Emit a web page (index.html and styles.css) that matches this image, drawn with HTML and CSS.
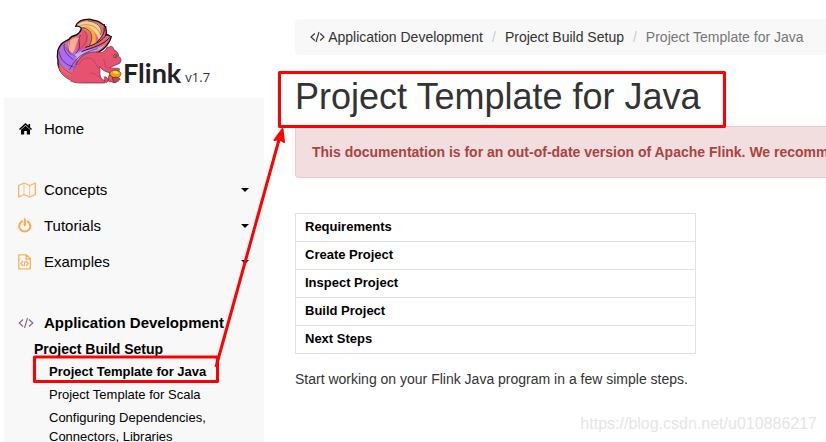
FILE: index.html
```html
<!DOCTYPE html>
<html lang="en">
<head>
    <meta charset="UTF-8">
    <meta name="viewport" content="width=device-width, initial-scale=1.0">
    <title>Apache Flink 1.7 Documentation: Project Template for Java</title>
    <link rel="stylesheet" href="styles.css">
</head>
<body>
    <div class="page">
        <aside class="sidebar">
            <a class="logo" href="#">
                <svg class="logo-image" width="70" height="72" viewBox="0 0 210 216" aria-hidden="true">
                    <!-- Tail -->
                    <path d="M62,200 C28,190 6,165 9,135 C4,120 10,112 8,108 C16,84 22,84 42,73 C46,66 54,62 64,60 C70,56 77,50 79,42 C78,35 72,32 62,34 C66,20 82,12 98,13 C106,10 112,16 122,17 C138,20 144,32 148,29 C147,35 151,37 152,35 C152,45 158,51 152,60 C161,57 161,63 169,65 C165,83 149,102 130,112 C105,121 80,128 62,150 Z" fill="#e8657a" stroke="#111" stroke-width="4" stroke-linejoin="round" />
                    <path d="M66,30 C86,14 116,15 130,28 C143,40 144,57 132,76 C124,49 107,34 79,36 Z" fill="#fbd08a" />
                    <path d="M89,33 C111,34 126,53 122,82 L105,94 C113,65 109,49 89,43 Z" fill="#f8a83c" />
                    <path d="M82,45 C102,53 105,74 93,102 L66,115 C59,86 82,70 82,45 Z" fill="#e7526f" />
                    <path d="M44,77 C57,67 67,65 74,70 C60,82 65,98 53,116 C40,106 34,87 44,77 Z" fill="#f6b09a" />
                    <path d="M38,79 C29,93 36,107 49,117 C66,96 104,107 136,91 C119,116 87,114 67,137 L57,170 C32,163 11,151 10,121 C10,99 23,88 38,79 Z" fill="#ad6cf0" />
                    <path d="M59,119 C87,99 116,110 150,89 C131,114 95,111 68,138 Z" fill="#cfa8f5" />
                    <path d="M147,38 C151,57 138,67 126,82 M153,59 C146,74 120,90 91,97 M163,68 C145,91 112,97 80,110" fill="none" stroke="#231724" stroke-width="3" />
                    <path d="M82,38 C111,42 117,68 103,91 M77,60 C62,80 87,93 62,115 M28,86 C23,106 39,123 55,134 M12,109 C15,137 35,150 55,156 M128,101 C94,111 66,119 44,164 M98,18 C124,19 147,38 136,60" fill="none" stroke="#32202e" stroke-width="2" />
                    <path d="M71,34 C95,23 125,31 135,55 M88,48 C105,63 93,88 73,105 M44,77 C46,95 31,98 47,119 M10,133 C18,161 39,172 61,182 M103,111 C73,123 60,138 55,174 M32,96 C37,111 51,118 65,126" fill="none" stroke="#32202e" stroke-width="1" />
                    <!-- Body -->
                    <path d="M47,198 C67,187 56,151 71,135 C87,112 115,107 141,113 C149,108 154,103 155,98 C158,94 164,99 165,94 C171,92 176,98 177,105 C187,109 190,115 191,123 C199,130 200,137 195,144 C187,149 174,153 164,158 C172,161 184,158 193,161 C195,169 185,174 169,173 C154,173 142,165 134,155 C136,176 133,187 142,193 C151,197 153,200 149,204 L76,204 C64,204 54,201 47,198 Z" fill="#e6526f" stroke="#642139" stroke-width="2" />
                    <path d="M48,184 C56,197 66,202 84,202 L61,201 C36,194 16,180 9,151 C21,170 33,177 48,184 Z" fill="#e6526f" />
                    <path d="M62,150 C58,170 50,182 40,186 L62,202 L90,202 L90,150 Z" fill="#e6526f" />
                    <path d="M71,151 C76,133 94,124 111,132 C124,139 119,151 133,160 M142,193 C124,180 108,166 107,178 M144,132 C154,142 145,158 160,160" fill="none" stroke="#792643" stroke-width="1" />
                    <path d="M149,185 C159,186 157,196 162,195 L154,203 L149,199 Z M166,172 L159,190 C157,200 163,202 170,200 C178,206 190,201 186,188 Z" fill="#e6526f" stroke="#642139" stroke-width="2" />
                    <circle cx="181" cy="123" r="5" fill="#efc45d" stroke="#64303b" stroke-width="3" />
                    <circle cx="182" cy="123" r="2" fill="#222" />
                    <!-- Acorn -->
                    <path d="M164,175 C167,162 195,162 198,176 C196,188 185,191 176,188 C169,185 165,181 164,175 Z" fill="#f5a000" stroke="#54302a" stroke-width="2" />
                    <path d="M173,170 C180,165 190,169 191,176 C181,178 176,175 173,170 Z" fill="#ffd95c" />
                    <path d="M172,188 C184,184 193,188 196,192 C190,199 182,205 176,202 Z" fill="#c84360" stroke="#54302a" stroke-width="2" />
                </svg>
                <span class="logo-name">Flink</span>
                <span class="logo-version">v1.7</span>
            </a>

            <nav class="sidenav">
                <a class="nav-item nav-home" href="#">
                    <svg class="nav-icon" width="18" height="16" viewBox="0 0 18 16" aria-hidden="true">
                        <path d="M1.5,8.5 L7.5,3 L13.5,8.5 M11.3,3 V6" fill="none" stroke="#000" stroke-width="1.6" />
                        <path d="M3,8.7 L7.5,4.8 L12,8.7 V13.5 H8.8 V10 H6.2 V13.5 H3 Z" fill="#000" />
                    </svg>
                    Home
                </a>
                <a class="nav-item" href="#">
                    <svg class="nav-icon" width="18" height="16" viewBox="0 0 18 16" aria-hidden="true">
                        <path d="M0.7,3.5 L6,1 L11.7,3.5 L17.3,1 V12.5 L11.7,15 L6,12.5 L0.7,15 Z" fill="none" stroke="#fbb15b" stroke-width="1.3" stroke-linejoin="round" />
                        <path d="M6,1 V12.5 M11.7,3.5 V15" stroke="#fbc78d" stroke-width="1" />
                    </svg>
                    Concepts
                    <span class="caret"></span>
                </a>
                <a class="nav-item" href="#">
                    <svg class="nav-icon" width="18" height="16" viewBox="0 0 18 16" aria-hidden="true">
                        <path d="M3.9,3.4 A5.5,5.5 0 1 0 9.7,3.4 M6.8,1.3 V7.5" fill="none" stroke="#fbaa4d" stroke-width="2.1" stroke-linecap="round" />
                    </svg>
                    Tutorials
                    <span class="caret"></span>
                </a>
                <a class="nav-item" href="#">
                    <svg class="nav-icon" width="18" height="16" viewBox="0 0 18 16" aria-hidden="true">
                        <path d="M0.8,0.8 H8.5 L12.3,4.6 V14.8 H0.8 Z M8.2,0.8 V5 H12.3 M5,7 L3,9.5 L5,12 M8.2,7 L10.2,9.5 L8.2,12 M7.2,6.8 L6,12.4" fill="none" stroke="#fbb15b" stroke-width="1.3" />
                    </svg>
                    Examples
                    <span class="caret"></span>
                </a>
                <a class="nav-item nav-section" href="#">
                    <svg class="nav-icon" width="18" height="16" viewBox="0 0 18 16" aria-hidden="true">
                        <path d="M5,4.5 L1.2,8 L5,11.5 M11,4.5 L14.8,8 L11,11.5 M9.5,3 L6.5,13" fill="none" stroke="#85608a" stroke-width="1.1" />
                    </svg>
                    Application Development
                </a>
                <a class="nav-sub" href="#">Project Build Setup</a>
                <a class="nav-page active" href="#">Project Template for Java</a>
                <a class="nav-page" href="#">Project Template for Scala</a>
                <a class="nav-page" href="#">Configuring Dependencies, Connectors, Libraries</a>
            </nav>
        </aside>

        <main class="content">
            <ol class="breadcrumb">
                <li>
                    <svg width="15" height="12" viewBox="0 0 15 12" aria-hidden="true">
                        <path d="M4.8,2.5 L1,6 L4.8,9.5 M10.2,2.5 L14,6 L10.2,9.5 M9,1 L6,11" fill="none" stroke="#333" stroke-width="1.1" />
                    </svg>
                    <a href="#">Application Development</a>
                </li>
                <li><a href="#">Project Build Setup</a></li>
                <li class="current">Project Template for Java</li>
            </ol>

            <h1>Project Template for Java</h1>

            <div class="alert"><strong>This documentation is for an out-of-date version of Apache Flink. We recommend</strong></div>

            <ul class="toc">
                <li><a href="#">Requirements</a></li>
                <li><a href="#">Create Project</a></li>
                <li><a href="#">Inspect Project</a></li>
                <li><a href="#">Build Project</a></li>
                <li><a href="#">Next Steps</a></li>
            </ul>

            <p>Start working on your Flink Java program in a few simple steps.</p>
        </main>
    </div>

    <!-- Red marks over the page -->
    <svg class="marks" width="826" height="442" viewBox="0 0 826 442" aria-hidden="true">
        <rect x="279.5" y="72.5" width="445" height="54" />
        <rect x="34.5" y="357" width="183" height="24.5" />
        <path d="M216,367 L279.5,138" />
        <path class="marks-head" d="M282.5,129 L274.5,140 L279,139 L284,142 Z" />
    </svg>
    <div class="watermark">https://blog.csdn.net/u010886217</div>
</body>
</html>
```
FILE: styles.css
```css
* {
    box-sizing: border-box;
}
body {
    margin: 0;
    height: 100vh;
    overflow: hidden;
    position: relative;
    background-color: #fff;
    color: #333;
    font-family: "Liberation Sans", Arial, sans-serif;
    font-size: 14px;
    line-height: 20px;
}
a {
    color: inherit;
    text-decoration: none;
}
.page {
    display: flex;
    gap: 31px;
    height: 100vh;
    padding-left: 4px;
}

/* Sidebar */
.sidebar {
    flex: 0 0 260px;
    display: flex;
    flex-direction: column;
}
.logo {
    flex: none;
    display: flex;
    align-items: flex-end;
    height: 98px;
    padding: 0 0 11px 51px;
}
.logo-image {
    flex: none;
    margin-right: -2px;
}
.logo-name {
    font-family: Lato, sans-serif;
    font-size: 27px;
    font-weight: bold;
    line-height: 28px;
    color: #222;
}
.logo-version {
    margin-left: 4px;
    font-family: "Open Sans", sans-serif;
    font-size: 13px;
}
.sidenav {
    flex: 1;
    padding-top: 13px;
    background-color: #f8f8f8;
    color: #000;
}
.nav-item {
    display: flex;
    align-items: center;
    height: 36px;
    padding: 0 15px 0 14px;
    font-size: 15px;
}
.nav-icon {
    margin-right: 8px;
}
.nav-home,
.nav-item:nth-child(4) {
    margin-bottom: 25px;
}
.nav-section {
    font-weight: bold;
}
.caret {
    margin-left: auto;
    border-top: 4px solid #000;
    border-left: 4px solid transparent;
    border-right: 4px solid transparent;
}
.nav-sub {
    display: block;
    padding-left: 30px;
    margin-bottom: 3px;
    line-height: 16px;
    font-weight: bold;
}
.nav-page {
    display: block;
    padding: 2px 50px 2px 45px;
    font-size: 13px;
    line-height: 19px;
}
.nav-page.active {
    font-weight: bold;
}

/* Content */
.content {
    flex: 1;
    min-width: 0;
    padding-top: 19px;
}
.breadcrumb {
    display: flex;
    margin: 0;
    padding: 8px 15px;
    list-style: none;
    white-space: nowrap;
    background-color: #f8f8f8;
    border-radius: 4px 0 0 4px;
}
.breadcrumb li + li::before {
    content: "/";
    padding: 0 9px;
    color: #ccc;
}
.breadcrumb svg {
    vertical-align: -1px;
}
.breadcrumb .current {
    color: #777;
}
h1 {
    margin: 22px 0 9px;
    font-size: 36px;
    font-weight: normal;
    line-height: 40px;
}
.alert {
    padding: 15px 16px;
    overflow: hidden;
    white-space: nowrap;
    color: #a94442;
    background-color: #f2dede;
    border: 1px solid #ebccd1;
    border-right: none;
    border-radius: 4px 0 0 4px;
}
.toc {
    max-width: 401px;
    margin: 35px 0 15px;
    padding: 0;
    list-style: none;
    border: 1px solid #e2e2e2;
    color: #000;
    font-size: 13px;
    font-weight: bold;
}
.toc li {
    padding: 3px 9px 4px;
}
.toc li + li {
    border-top: 1px solid #e2e2e2;
}
p {
    margin: 0;
}

/* Overlays */
.marks {
    position: absolute;
    top: 0;
    left: 0;
    fill: none;
    stroke: #fe0000;
    stroke-width: 3;
    stroke-linejoin: round;
    pointer-events: none;
}
.marks-head {
    fill: #fe0000;
    stroke-width: 2;
}
.watermark {
    position: absolute;
    right: 9px;
    bottom: 8px;
    color: #e6e6e6;
    font-size: 16px;
}
```
